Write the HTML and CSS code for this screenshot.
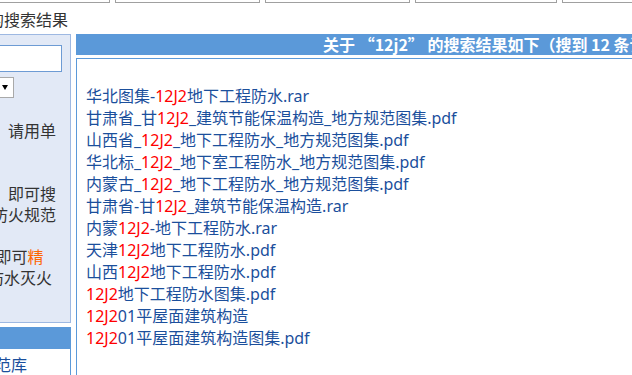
FILE: index.html
```html
<!DOCTYPE html>
<html lang="zh-CN">
<head>
<meta charset="utf-8">
<title>搜索结果</title>
<link rel="stylesheet" href="styles.css">
</head>
<body>
<div class="page">
  <div class="tabs">
    <div class="tab tab-a"></div>
    <div class="tab"></div>
    <div class="tab"></div>
    <div class="tab tab-d"></div>
    <div class="tab tab-e"></div>
  </div>
  <div class="title">关键字的搜索结果</div>
  <div class="main">
    <aside class="side">
      <div class="panel">
        <div class="input"></div>
        <div class="select"><span class="arrow"></span></div>
        <div class="tips">
          <p>，请用单</p>
          <p>&nbsp;</p>
          <p>&nbsp;</p>
          <p>，即可搜</p>
          <p>防火规范</p>
          <p>&nbsp;</p>
          <p>&nbsp;即可<span class="hl">精</span></p>
          <p><span class="pull">防水灭火</span></p>
        </div>
      </div>
      <div class="panel2">
        <div class="panel2-head"></div>
        <div class="panel2-body">规范库</div>
      </div>
    </aside>
    <section class="content">
      <div class="bar">关于 “12j2” 的搜索结果如下（搜到 12 条记录）</div>
      <div class="box">
        <a class="row">华北图集-<em>12J2</em>地下工程防水.rar</a>
        <a class="row">甘肃省_甘<em>12J2</em>_建筑节能保温构造_地方规范图集.pdf</a>
        <a class="row">山西省_<em>12J2</em>_地下工程防水_地方规范图集.pdf</a>
        <a class="row">华北标_<em>12J2</em>_地下室工程防水_地方规范图集.pdf</a>
        <a class="row">内蒙古_<em>12J2</em>_地下工程防水_地方规范图集.pdf</a>
        <a class="row">甘肃省-甘<em>12J2</em>_建筑节能保温构造.rar</a>
        <a class="row">内蒙<em>12J2</em>-地下工程防水.rar</a>
        <a class="row">天津<em>12J2</em>地下工程防水.pdf</a>
        <a class="row">山西<em>12J2</em>地下工程防水.pdf</a>
        <a class="row"><em>12J2</em>地下工程防水图集.pdf</a>
        <a class="row"><em>12J2</em>01平屋面建筑构造</a>
        <a class="row"><em>12J2</em>01平屋面建筑构造图集.pdf</a>
      </div>
    </section>
  </div>
</div>
</body>
</html>
```
FILE: styles.css
```css
html, body {
  margin: 0;
  padding: 0;
  background: #fff;
  overflow: hidden;
}
body {
  font-family: "Noto Sans", "Noto Sans CJK SC", sans-serif;
  color: #333;
}
.page {
  margin-left: -30px;
  width: 900px;
}
.tabs {
  height: 3px;
  overflow: hidden;
  display: flex;
  align-items: flex-end;
  gap: 5px;
}
.tab {
  box-sizing: border-box;
  height: 30px;
  width: 145px;
  flex: none;
  border: 1px solid #a0a0a0;
}
.tab-a { width: 140px; }
.tab-d { width: 142px; }
.tab-e { width: 200px; }
.title {
  margin-top: 6px;
  font-family: "Noto Sans CJK SC", sans-serif;
  font-size: 16px;
  line-height: 20px;
  height: 20px;
  color: #333;
  white-space: nowrap;
  margin-left: -30px;
}
.main {
  margin-top: 5px;
  display: flex;
  align-items: flex-start;
  gap: 5px;
}
.side {
  width: 101px;
  flex: none;
}
.panel {
  box-sizing: border-box;
  height: 289px;
  border: 1px solid #9db8e2;
  background: #e2e9f6;
  padding: 0 8px;
}
.input {
  box-sizing: border-box;
  margin-top: 10px;
  height: 27px;
  background: #fff;
  border: 1px solid #6d9bd4;
}
.select {
  box-sizing: border-box;
  margin-top: 5px;
  width: 35px;
  height: 21px;
  background: #fff;
  border: 1px solid #a9a9a9;
  position: relative;
}
.arrow {
  position: absolute;
  right: 5px;
  top: 7px;
  width: 0;
  height: 0;
  border-left: 3px solid transparent;
  border-right: 3px solid transparent;
  border-top: 5px solid #000;
}
.tips {
  margin-top: 22px;
  padding-left: 13px;
  font-family: "Noto Sans CJK SC", sans-serif;
  font-size: 16px;
  line-height: 21px;
  white-space: nowrap;
  color: #333;
}
.tips p { margin: 0; }
.pull { margin-left: -4px; }
.hl { color: #ff6600; }
.panel2 { margin-top: 4px; }
.panel2-head {
  height: 22px;
  background: #5b99d9;
}
.panel2-body {
  border-left: 1px solid #5b99d9;
  border-right: 1px solid #5b99d9;
  padding: 4px 8px 0;
  font-family: "Noto Sans CJK SC", sans-serif;
  font-size: 16px;
  line-height: 22px;
  height: 60px;
  color: #1b4f9c;
  white-space: nowrap;
}
.content {
  flex: none;
  width: 760px;
}
.bar {
  height: 21px;
  background: #5b99d9;
  color: #fff;
  font-family: "Noto Sans CJK SC", sans-serif;
  font-weight: bold;
  font-size: 16px;
  line-height: 21px;
  padding-left: 247px;
  white-space: nowrap;
}
.box {
  margin-top: 3px;
  border: 1px solid #5b99d9;
  padding: 26px 9px 40px;
  height: 400px;
}
.row {
  display: block;
  font-size: 16px;
  line-height: 22px;
  color: #1b4f9c;
  white-space: nowrap;
  text-decoration: none;
}
.row em {
  font-style: normal;
  color: #ff0000;
}
```
